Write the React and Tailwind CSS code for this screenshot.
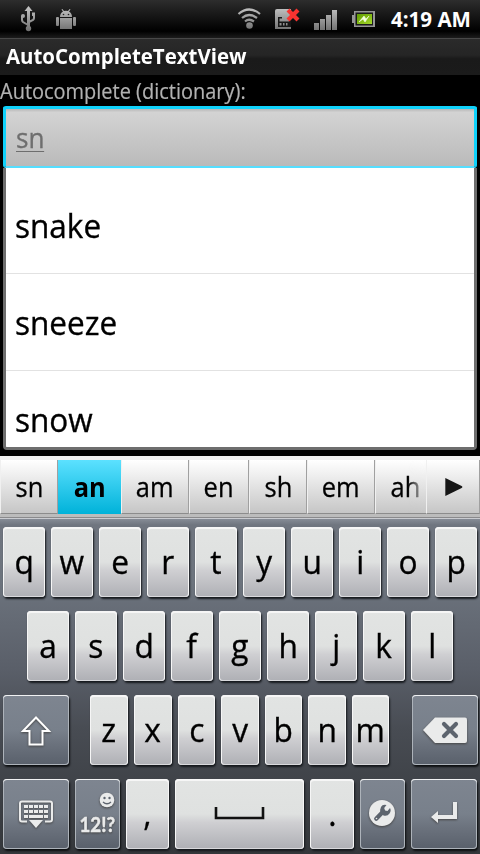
import React from "react";

const FONT = "font-['Open_Sans','Noto_Sans',sans-serif]";
const LIGHT =
  "bg-[linear-gradient(180deg,#e2e4e3_0%,#dfe1e0_50%,#cfcfd2_62%,#b0b1b6_98%)] text-black shadow-[inset_0_1px_0_1px_#f6f6f6,inset_0_0_0_1px_#d9d9dc,1px_2px_2px_#16191d]";
const DARK =
  "bg-[linear-gradient(180deg,#7e8590_0%,#78808b_50%,#6b727d_70%,#59606b_100%)] shadow-[inset_0_1px_0_0_#f0f1f2,inset_0_0_0_1px_#adb3ba,1px_2px_2px_#0c0e10]";

function Key({ w = "w-[42px]", dark = false, className = "", children }) {
  return (
    <div
      className={`${w} ${dark ? DARK : LIGHT} ${className} flex h-[70px] shrink-0 items-center justify-center rounded-[4px]`}
    >
      {children}
    </div>
  );
}

function Letter({ children }) {
  return (
    <span className="inline-block scale-x-[0.96] text-[33px] leading-[70px] [-webkit-text-stroke:0.35px_#000]">
      {children}
    </span>
  );
}

function StatusBar() {
  return (
    <div className="flex h-[38px] shrink-0 items-center bg-[linear-gradient(180deg,#2d2d2d_0%,#000_82%,#1c1c1c_100%)]">
      <svg width="480" height="38" viewBox="0 0 480 38">
        <defs>
          <linearGradient id="metal" x1="0" y1="6" x2="0" y2="31" gradientUnits="userSpaceOnUse">
            <stop offset="0" stopColor="#c8c8c8" />
            <stop offset="1" stopColor="#6f6f6f" />
          </linearGradient>
          <linearGradient id="cell" x1="0" y1="0" x2="1" y2="1">
            <stop offset="0" stopColor="#5f9a00" />
            <stop offset="1" stopColor="#a4d82b" />
          </linearGradient>
        </defs>
        <g fill="none" stroke="url(#metal)" strokeWidth="2">
          <path d="M28 10v17h1V10z M28 25l-5-3q-1-1-1-2v-4 M29 22l4-2q1-1 1-2v-4" />
        </g>
        <g fill="url(#metal)">
          <path d="M28.500 6l4 5h-8z" />
          <circle cx="28.500" cy="28.500" r="2.700" />
          <circle cx="23" cy="16" r="2" />
          <rect x="32" y="12.500" width="3" height="3.500" />
          <path d="M60 17q0-4 3-5.500l-1.500-2 .8-.5 1.700 2q2-.6 4 0l1.700-2 .8.500-1.500 2Q72 13 72 17z" />
          <rect x="60" y="18" width="12" height="11" />
          <rect x="56" y="17" width="3" height="9" rx="1" />
          <rect x="73" y="17" width="3" height="9" rx="1" />
        </g>
        <circle cx="63.500" cy="14.500" r=".8" fill="#222" />
        <circle cx="68.500" cy="14.500" r=".8" fill="#222" />
        <g fill="none" stroke="url(#metal)" strokeWidth="2.200">
          <path d="M238.500 14q10.500-9 21.500 0" />
          <path d="M242 18q7-6 15 0" />
          <path d="M245 21.500q4-3.500 9 0" />
        </g>
        <circle cx="249.500" cy="25.500" r="3.300" fill="url(#metal)" />
        <path d="M277 9h14v20h-16V11q0-2 2-2z" fill="url(#metal)" />
        <path d="M278 17h4v1.500h-2.500v3H289V17h2v10h-13z" fill="#171717" />
        <path d="M279.500 23h2v2.500h-2zM283 23h1.500v2.500H283zM286 23h1.500v2.500H286z" fill="#8d8d8d" />
        <path d="M289.500 11.500l7 7M296.500 11.500l-7 7" stroke="#fa3330" strokeWidth="4.200" strokeLinecap="square" />
        <g fill="url(#metal)">
          <rect x="314" y="23" width="5" height="7" />
          <rect x="320" y="19" width="5" height="11" />
          <rect x="326" y="15" width="5" height="15" />
          <rect x="332" y="10" width="5" height="20" />
        </g>
        <path d="M354 11h21v16h-21v-4h-2v-8h2z" fill="#969696" />
        <rect x="355.500" y="12.500" width="17.500" height="13" fill="#1b1b1b" />
        <rect x="357" y="14" width="15" height="10" fill="url(#cell)" />
        <path d="M359 22l5-6 2 3 3-3-4 6-2-3z" fill="#f4ffe0" stroke="#f4ffe0" strokeWidth=".6" />
        <text x="391" y="27" textLength="80" lengthAdjust="spacingAndGlyphs" fill="#fff" fontSize="20.500" fontWeight="700">
          4:19 AM
        </text>
      </svg>
    </div>
  );
}

function Suggestion({ w, active = false, children }) {
  return (
    <div
      className={`${w} flex h-[54px] shrink-0 items-center justify-center overflow-hidden text-[26.500px] leading-[54px] text-black ${
        active
          ? "bg-[linear-gradient(180deg,#5ce1ff,#00b2d9)] font-bold"
          : "border-r border-b border-l border-r-[#a0a0a0] border-b-[#8c8c8c] border-l-[#f0f0f0] bg-[linear-gradient(180deg,#fff,#c6c6c6)] [-webkit-text-stroke:0.3px_#000]"
      }`}
    >
      <span className="inline-block scale-x-[0.96]">{children}</span>
    </div>
  );
}

function Word({ h, border = true, children }) {
  return (
    <div className={`${h} ${border ? "border-b border-[#e2e2e2]" : ""} shrink-0 pl-[9px] text-[33px] leading-[98px] text-black`}>
      <span className="inline-block origin-left scale-x-[0.955] [-webkit-text-stroke:0.35px_#000]">{children}</span>
    </div>
  );
}

export default function App() {
  return (
    <div className={`${FONT} flex h-[854px] w-[480px] flex-col overflow-hidden bg-black`}>
      <StatusBar />
      <div className="h-[37px] shrink-0 border-t border-[#484848] bg-[linear-gradient(180deg,#2b2b2b,#252525_45%,#1a1a1a_55%,#1b1b1b)] pl-1.5 text-[20.500px] leading-[35px] font-bold whitespace-nowrap text-white">
        <span className="inline-block origin-left scale-x-[0.996]">AutoCompleteTextView</span>
      </div>
      <div className="h-[31px] shrink-0 text-[21.500px] leading-[32px] whitespace-nowrap text-[#b2b2b2]">
        <span className="inline-block origin-left scale-x-[0.929] [-webkit-text-stroke:0.2px_#b2b2b2]">
          Autocomplete (dictionary):
        </span>
      </div>
      <div className="mx-[3px] h-[62px] shrink-0 rounded-[3px] border-[3px] border-b-2 border-[#10d2fb] border-b-[#55deff] bg-[linear-gradient(180deg,#b8b8b8,#d3d3d3_6%,#bababa)] pl-[10px]">
        <span className="inline-block h-[43px] origin-left scale-x-[0.97] border-b border-[#6e6e6e] text-[27px] leading-[57px] text-[#6e6e6e] [-webkit-text-stroke:0.3px_#6e6e6e]">
          sn
        </span>
      </div>
      <div className="mx-[3px] flex h-[282px] shrink-0 flex-col overflow-hidden rounded-b-[4px] border-x-[3px] border-b-[3px] border-[#6e6e6e] bg-white pt-[9px]">
        <Word h="h-[97px]">snake</Word>
        <Word h="h-[97px]">sneeze</Word>
        <Word h="h-[97px]" border={false}>snow</Word>
      </div>
      <div className="mt-[6px] h-[4px] shrink-0 bg-[#f0f0f0]" />
      <div className="flex h-[54px] shrink-0 bg-[#ddd]">
        <Suggestion w="w-[58px]">sn</Suggestion>
        <Suggestion w="w-[63px]" active>an</Suggestion>
        <Suggestion w="w-[68px]">am</Suggestion>
        <Suggestion w="w-[60px]">en</Suggestion>
        <Suggestion w="w-[58px]">sh</Suggestion>
        <Suggestion w="w-[68px]">em</Suggestion>
        <div className="relative w-[51px] shrink-0 overflow-hidden">
          <Suggestion w="w-[60px]">ah</Suggestion>
          <div className="absolute top-0 right-0 h-[53px] w-[18px] bg-[linear-gradient(180deg,#fff,#c6c6c6)] [mask-image:linear-gradient(90deg,transparent,black)]" />
        </div>
        <Suggestion w="w-[54px]">
          <svg width="22" height="22" viewBox="0 0 22 22">
            <path d="M3 2l17 8q1.500 1 0 2L3 20z" fill="#161616" />
          </svg>
        </Suggestion>
      </div>
      <div className="h-[5px] shrink-0 border-b border-[#c9cbd0] bg-[linear-gradient(180deg,#bcbcbc_3px,#8a8a8c_3px)]" />
      <div className="flex h-[335px] shrink-0 flex-col gap-[14px] bg-[linear-gradient(180deg,#868c96_0px,#6f757f_6px,#6d747e_60px,#5a5f69_150px,#484c53_210px,#34373b_335px)] pt-2">
        <div className="flex gap-[6px] pl-[3px]">
          {"qwertyuiop".split("").map((c) => (
            <Key key={c}><Letter>{c}</Letter></Key>
          ))}
        </div>
        <div className="flex gap-[6px] pl-[27px]">
          {"asdfghjkl".split("").map((c) => (
            <Key key={c}><Letter>{c}</Letter></Key>
          ))}
        </div>
        <div className="flex gap-[6px] pl-[3px]">
          <Key w="w-[66px]" dark className="mr-[15px]">
            <svg width="34" height="36" viewBox="0 0 34 36" className="relative top-px drop-shadow-[0_1px_1px_#444]">
              <path d="M17 4.500L30 18h-6.500v13.500h-13V18H4z" fill="none" stroke="#fff" strokeWidth="2" />
            </svg>
          </Key>
          <Key w="w-[38px]"><Letter>z</Letter></Key>
          <Key w="w-[38px]"><Letter>x</Letter></Key>
          <Key w="w-[37px]"><Letter>c</Letter></Key>
          <Key w="w-[38px]"><Letter>v</Letter></Key>
          <Key w="w-[37px]"><Letter>b</Letter></Key>
          <Key w="w-[38px]"><Letter>n</Letter></Key>
          <Key w="w-[37px]"><Letter>m</Letter></Key>
          <Key w="w-[66px]" dark className="ml-[17px]">
            <svg width="66" height="70" viewBox="0 0 66 70" className="drop-shadow-[0_1px_1px_#444]">
              <path d="M11 35L23 22.500h30q2 0 2 2v21.500q0 2-2 2H23z" fill="#eaebeb" />
              <path d="M32 29l12 12M44 29L32 41" stroke="#5d646e" strokeWidth="4.200" strokeLinecap="round" />
            </svg>
          </Key>
        </div>
        <div className="flex gap-[6px] pl-[3px]">
          <Key w="w-[66px]" dark>
            <svg width="66" height="70" viewBox="0 0 66 70" className="drop-shadow-[0_1px_1px_#444]">
              <path d="M24 42.500h-5q-2 0-2-2v-16q0-2 2-2h28q2 0 2 2v16q0 2-2 2h-5" fill="none" stroke="#eaebeb" strokeWidth="2" />
              <path d="M26 41h14l-7 8z" fill="#eaebeb" />
              <g stroke="#eaebeb" strokeWidth="3">
                <path d="M21 27.500h24M21 32.500h24" strokeDasharray="4 1" />
                <path d="M21 37.500h4M26 37.500h14M41 37.500h4" />
              </g>
            </svg>
          </Key>
          <Key w="w-[45px]" dark>
            <svg width="45" height="70" viewBox="0 0 45 70" className="drop-shadow-[0_1px_1px_#444]">
              <circle cx="32" cy="21" r="7.300" fill="#eaebeb" />
              <circle cx="29.500" cy="19" r="1.200" fill="#5d646e" />
              <circle cx="34.500" cy="19" r="1.200" fill="#5d646e" />
              <path d="M28 23q4 3.500 8 0" fill="none" stroke="#5d646e" strokeWidth="1.300" />
              <text x="4.500" y="53" textLength="35.500" lengthAdjust="spacingAndGlyphs" fill="#eaebeb" stroke="#eaebeb" strokeWidth=".5" fontSize="21" fontWeight="700" className="font-['Lato','Open_Sans',sans-serif]">12!?</text>
            </svg>
          </Key>
          <Key w="w-[43px]"><Letter>,</Letter></Key>
          <Key w="w-[129px]">
            <svg width="54" height="16" viewBox="0 0 54 16" className="relative -top-px">
              <path d="M3 2v11h47V2" fill="none" stroke="#111" strokeWidth="2.600" />
            </svg>
          </Key>
          <Key w="w-[44px]"><Letter>.</Letter></Key>
          <Key w="w-[45px]" dark>
            <svg width="45" height="70" viewBox="0 0 45 70" className="drop-shadow-[0_1px_1px_#444]">
              <circle cx="22" cy="34" r="13" fill="#eaebeb" />
              <path d="M16.200 39.800l7-7.300" stroke="#5d646e" strokeWidth="4.200" strokeLinecap="round" />
              <path d="M26.500 26q-4-1-5.500 2t-.5 5.500l3 3q4 1 6-2t.5-5.500l-2.500 3-2.500-.5-.8-2.500z" fill="#5d646e" />
              <circle cx="16.500" cy="39.500" r=".8" fill="#eaebeb" />
            </svg>
          </Key>
          <Key w="w-[66px]" dark>
            <svg width="66" height="70" viewBox="0 0 66 70" className="drop-shadow-[0_1px_1px_#444]">
              <path d="M42 23h4v17H27v4l-7-6 7-6v4h15z" fill="#eaebeb" />
            </svg>
          </Key>
        </div>
      </div>
    </div>
  );
}
